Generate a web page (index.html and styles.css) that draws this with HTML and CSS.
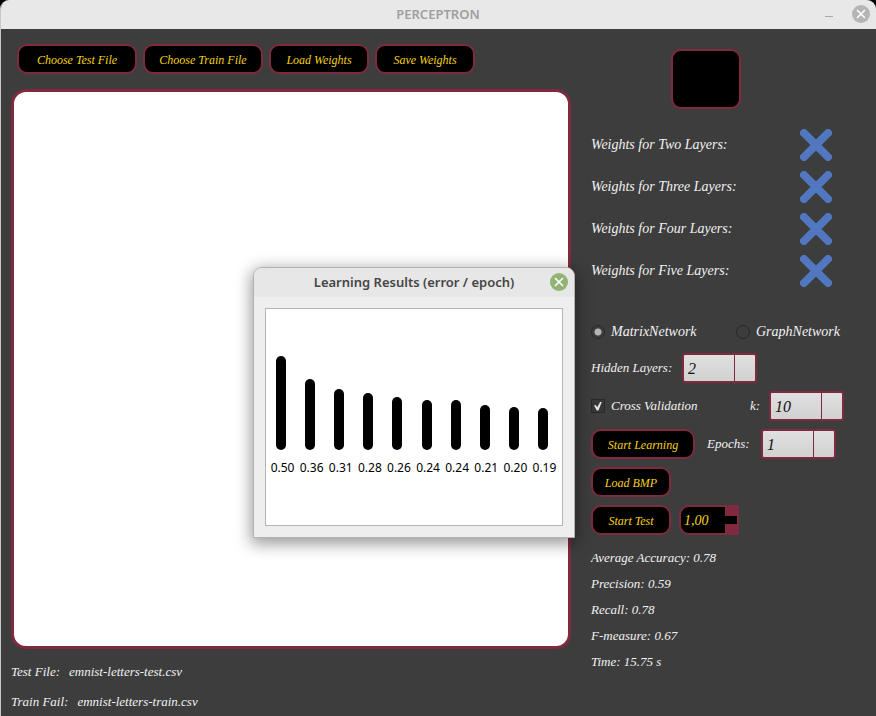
FILE: index.html
```html
<!DOCTYPE html>
<html lang="en">
<head>
<meta charset="utf-8">
<title>PERCEPTRON</title>
<link rel="stylesheet" href="styles.css">
</head>
<body>
<div class="window">
  <header class="titlebar">
    <h1 class="title">PERCEPTRON</h1>
    <div class="window-controls">
      <button class="icon-button" type="button" aria-label="Minimize"><svg width="10" height="18" viewBox="0 0 10 18"><path d="M1 11.5h8" stroke="#a9a9a9"/></svg></button>
      <button class="icon-button" type="button" aria-label="Close"><svg width="18" height="18" viewBox="0 0 18 18"><circle cx="9" cy="9" r="9" fill="#b5b5b5"/><path d="M5 5l8 8M13 5l-8 8" stroke="#fff" stroke-width="1.6"/></svg></button>
    </div>
  </header>
  <main class="content">
    <section class="workspace">
      <div class="toolbar">
        <button class="button file" type="button">Choose Test File</button>
        <button class="button file" type="button">Choose Train File</button>
        <button class="button weights" type="button">Load Weights</button>
        <button class="button weights" type="button">Save Weights</button>
      </div>
      <div class="board"></div>
      <div class="files">
        <div class="file-line"><span>Test File:</span><span>emnist-letters-test.csv</span></div>
        <div class="file-line"><span>Train Fail:</span><span>emnist-letters-train.csv</span></div>
      </div>
    </section>
    <section class="panel">
      <div class="preview"></div>
      <ul class="layers">
        <li class="layer"><span>Weights for Two Layers:</span><svg class="cross" viewBox="0 0 32 32"><path d="M4 4l24 24M28 4L4 28"/></svg></li>
        <li class="layer"><span>Weights for Three Layers:</span><svg class="cross" viewBox="0 0 32 32"><path d="M4 4l24 24M28 4L4 28"/></svg></li>
        <li class="layer"><span>Weights for Four Layers:</span><svg class="cross" viewBox="0 0 32 32"><path d="M4 4l24 24M28 4L4 28"/></svg></li>
        <li class="layer"><span>Weights for Five Layers:</span><svg class="cross" viewBox="0 0 32 32"><path d="M4 4l24 24M28 4L4 28"/></svg></li>
      </ul>
      <div class="networks">
        <label class="choice matrix"><input class="radio" type="radio" name="network" checked>MatrixNetwork</label>
        <label class="choice"><input class="radio" type="radio" name="network">GraphNetwork</label>
      </div>
      <div class="form">
        <div class="row">
          <label class="hidden-label" for="hidden">Hidden Layers:</label>
          <div class="spin"><input class="spin-value" id="hidden" type="text" value="2"><span class="spin-buttons"></span></div>
        </div>
        <div class="row">
          <label class="choice cross-label"><input class="check" type="checkbox" checked>Cross Validation</label>
          <label class="k-label" for="folds">k:</label>
          <div class="spin"><input class="spin-value" id="folds" type="text" value="10"><span class="spin-buttons"></span></div>
        </div>
        <div class="row">
          <button class="button learn" type="button">Start Learning</button>
          <label class="epochs-label" for="epochs">Epochs:</label>
          <div class="spin"><input class="spin-value" id="epochs" type="text" value="1"><span class="spin-buttons"></span></div>
        </div>
        <div class="row">
          <button class="button small" type="button">Load BMP</button>
        </div>
        <div class="row">
          <button class="button small" type="button">Start Test</button>
          <div class="ratio"><input class="ratio-value" type="text" value="1,00" aria-label="Test share"><span class="ratio-buttons"></span></div>
        </div>
      </div>
      <div class="stats">
        <div>Average Accuracy: 0.78</div>
        <div>Precision: 0.59</div>
        <div>Recall: 0.78</div>
        <div>F-measure: 0.67</div>
        <div>Time: 15.75 s</div>
      </div>
    </section>
  </main>
  <div class="dialog" role="dialog" aria-labelledby="dialog-title">
    <header class="dialog-bar">
      <h2 class="dialog-title" id="dialog-title">Learning Results (error / epoch)</h2>
      <button class="icon-button" type="button" aria-label="Close results"><svg width="18" height="18" viewBox="0 0 18 18"><circle cx="9" cy="9" r="9" fill="#92b372"/><path d="M5 5l8 8M13 5l-8 8" stroke="#fff" stroke-width="1.6"/></svg></button>
    </header>
    <div class="chart">
      <div class="column"><span class="bar" style="height:94px"></span><span>0.50</span></div>
      <div class="column"><span class="bar" style="height:71px"></span><span>0.36</span></div>
      <div class="column"><span class="bar" style="height:61px"></span><span>0.31</span></div>
      <div class="column"><span class="bar" style="height:57px"></span><span>0.28</span></div>
      <div class="column"><span class="bar" style="height:53px"></span><span>0.26</span></div>
      <div class="column"><span class="bar" style="height:50px"></span><span>0.24</span></div>
      <div class="column"><span class="bar" style="height:50px"></span><span>0.24</span></div>
      <div class="column"><span class="bar" style="height:45px"></span><span>0.21</span></div>
      <div class="column"><span class="bar" style="height:43px"></span><span>0.20</span></div>
      <div class="column"><span class="bar" style="height:42px"></span><span>0.19</span></div>
    </div>
  </div>
</div>
</body>
</html>
```

FILE: styles.css
```css
* { box-sizing: border-box; }

body {
  margin: 0;
  background: #050505;
  color: #f2f2f2;
  font: italic 13px/20px "Z003", "URW Chancery L", "Liberation Serif", serif;
}

button, input { margin: 0; font: inherit; color: inherit; }

.window {
  position: relative;
  display: flex;
  flex-direction: column;
  min-height: 100vh;
  border-left: 1px solid #c8c8c8;
  border-radius: 9px 9px 0 0;
  background: #3d3d3d;
  overflow: hidden;
}

.titlebar {
  display: grid;
  grid-template-columns: 1fr auto 1fr;
  align-items: center;
  height: 29px;
  padding: 0 6px 2px 5px;
  background: #e8e8e8;
}

.title {
  grid-column: 2;
  margin: 0;
  color: #9f9f9f;
  font: 600 13px/20px "Noto Sans", sans-serif;
}

.window-controls { display: flex; justify-content: flex-end; gap: 18px; }

.icon-button { display: flex; padding: 0; border: 0; background: none; }

.content {
  flex: 1;
  display: grid;
  grid-template-columns: minmax(0, 1fr) 275px;
  gap: 20px;
  padding: 15px 10px 0;
}

.workspace { display: flex; flex-direction: column; }

.toolbar { display: flex; gap: 6px; padding-left: 6px; }

.button {
  height: 30px;
  padding: 2px 0 0;
  border: 2px solid #7f2a3e;
  border-radius: 10px;
  background: #000;
  color: #f5d015;
  font-size: 12px;
  line-height: 16px;
}

.file { width: 120px; }
.weights { width: 100px; }
.learn { width: 104px; }
.small { width: 80px; }

.board {
  flex: 1;
  margin: 15px 0 9px;
  border: 3px solid #7f2a3e;
  border-radius: 15px;
  background: #fff;
}

.files { display: grid; gap: 2px; line-height: 28px; }
.file-line { display: flex; gap: 9px; }

.preview {
  width: 70px;
  height: 60px;
  margin: 5px 0 15px 80px;
  border: 2px solid #7f2a3e;
  border-radius: 10px;
  background: #000;
}

.layers { margin: 0; padding: 0; list-style: none; font-size: 14px; }
.layer { display: flex; align-items: center; justify-content: space-between; height: 42px; padding-right: 34px; }
.cross { width: 32px; height: 32px; fill: none; stroke: #5077bf; stroke-width: 8; stroke-linecap: round; }

.networks { display: flex; margin: 30px 0 11px; font-size: 14px; }
.choice { display: flex; align-items: center; gap: 6px; }
.matrix { width: 145px; }

.radio, .check {
  appearance: none;
  width: 14px;
  height: 14px;
  border: 1px solid #292929;
}
.radio { border-radius: 50%; }
.radio:checked { background: radial-gradient(circle, #b4b4b4 3px, transparent 4px); }
.check { display: grid; place-items: center; background: #373737; }
.check:checked::before {
  content: "";
  width: 8px;
  height: 9px;
  background: #e4e4e4;
  clip-path: polygon(0 45%, 20% 40%, 40% 65%, 80% 0, 100% 0, 55% 100%, 35% 100%);
}

.form { display: grid; gap: 8px; }
.row { display: flex; align-items: center; height: 30px; }
.hidden-label { width: 91px; }
.cross-label { width: 159px; }
.k-label { width: 19px; }
.epochs-label { width: 54px; margin-left: 12px; }

.spin {
  display: flex;
  width: 75px;
  height: 30px;
  border: 2px solid #7f2a3e;
  border-radius: 3px;
  background: linear-gradient(#e0e0e0, #d1d1d1);
}
.spin-value {
  flex: 1;
  min-width: 0;
  padding: 2px 0 0 4px;
  border: 0;
  background: none;
  color: #111;
  font-size: 16px;
}
.spin-buttons { width: 21px; border-left: 1px solid #7f2a3e; }

.ratio {
  display: flex;
  align-items: center;
  width: 60px;
  height: 30px;
  margin-left: 8px;
  border: 2px solid #7f2a3e;
  border-radius: 10px 0 0 10px;
  background: #000;
}
.ratio-value { flex: 1; min-width: 0; padding: 2px 0 0 3px; border: 0; background: none; color: #f5d015; font-size: 14px; }
.ratio-buttons { width: 12px; height: 26px; border: solid #7f2a3e; border-width: 9px 0; }

.stats { display: grid; gap: 6px; margin-top: 13px; }

.dialog {
  position: absolute;
  top: 267px;
  left: 252px;
  width: 322px;
  border: 1px solid #b2b2b2;
  border-radius: 9px 9px 0 0;
  background: #eee;
  box-shadow: 0 4px 16px 2px rgba(0, 0, 0, 0.4);
}
.dialog-bar {
  display: grid;
  grid-template-columns: 1fr auto 1fr;
  align-items: center;
  height: 29px;
  padding: 0 6px 1px;
  border-radius: 8px 8px 0 0;
  background: #e7e7e7;
}
.dialog-title {
  grid-column: 2;
  margin: 0;
  color: #454545;
  font: 600 13px/20px "Noto Sans", sans-serif;
}
.dialog-bar .icon-button { justify-self: end; }

.chart {
  display: grid;
  grid-template-columns: repeat(10, 1fr);
  height: 218px;
  margin: 11px;
  padding: 0 3px 48px 2px;
  border: 1px solid #b4b4b4;
  background: #fff;
  color: #000;
  font: 12px/18px "Noto Sans", sans-serif;
}
.column { display: flex; flex-direction: column; align-items: center; justify-content: flex-end; gap: 9px; }
.bar { width: 10px; margin-right: 3px; border-radius: 5px; background: #000; }
```
